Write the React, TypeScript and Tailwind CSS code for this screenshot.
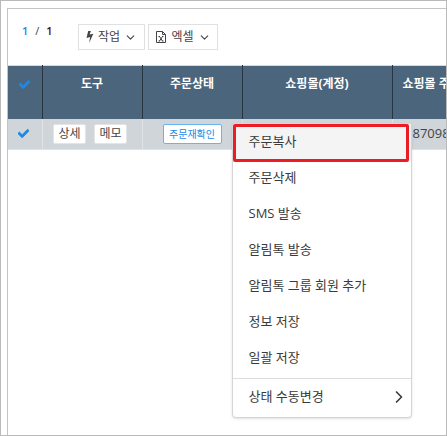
import { useState } from "react";
import { FaCheck } from "react-icons/fa";
import { FiChevronDown, FiChevronRight } from "react-icons/fi";

const menuItems = [
  "주문복사",
  "주문삭제",
  "SMS 발송",
  "알림톡 발송",
  "알림톡 그룹 회원 추가",
  "정보 저장",
  "일괄 저장",
];

const headers = ["도구", "주문상태", "쇼핑몰(계정)"];

function BoltIcon() {
  return (
    <svg viewBox="0 0 8 12" className="h-3 w-2" fill="currentColor" aria-hidden="true">
      <path d="M2.2 0h2.7L3.6 3.6l3.7-.8L3.2 12l.9-6-3.6.9z" />
    </svg>
  );
}

function ExcelIcon() {
  return (
    <svg viewBox="0 0 12 14" className="h-3.5 w-3" fill="none" stroke="currentColor" aria-hidden="true">
      <path d="M1.5 1.5h6l3 3v8h-9zM7.5 1.5v3h3" />
      <path d="M4.5 6.5l3 4.5M7.5 6.5l-3 4.5M3.5 6.5H5M7 6.5h1.500M3.500 11H5M7 11h1.500" />
    </svg>
  );
}

function CheckToggle({ label }: { label: string }) {
  const [checked, setChecked] = useState(true);
  return (
    <label className="inline-flex h-4 w-4 cursor-pointer items-center justify-center">
      <input
        type="checkbox"
        aria-label={label}
        checked={checked}
        onChange={() => setChecked(!checked)}
        className="peer sr-only"
      />
      <FaCheck
        size={11}
        stroke="currentColor"
        strokeWidth={40}
        className="text-[#1e88e5] opacity-0 peer-checked:opacity-100"
      />
    </label>
  );
}

function ContextMenu() {
  return (
    <ul
      role="menu"
      className="absolute top-1 -left-[11px] z-10 w-[180px] rounded-sm border border-[#d5d5d5] bg-white text-left text-[13px] text-[#3a3a3a] shadow-sm"
    >
      {menuItems.map((item, i) => (
        <li key={item} role="none" className="relative">
          <button
            type="button"
            role="menuitem"
            className={`block h-9 w-full px-4 text-left ${i === 0 ? "bg-[#f4f4f4]" : "bg-white"}`}
          >
            {item}
          </button>
          {/* callout frame around the first entry */}
          {i === 0 && (
            <span className="pointer-events-none absolute inset-x-0 top-0 z-10 mr-0.5 h-[38px] rounded-xs border-3 border-[#ed1c24]" />
          )}
        </li>
      ))}
      <li role="none" className="mt-0.5 border-t border-[#ddd] pb-0.5">
        <button
          type="button"
          role="menuitem"
          className="flex h-9 w-full items-center justify-between pr-0.5 pl-4"
        >
          상태 수동변경
          <FiChevronRight size={20} strokeWidth={2} />
        </button>
      </li>
    </ul>
  );
}

export default function App() {
  return (
    <div className="flex min-h-screen border border-[#bababa] bg-white pt-[7px] pl-1.5 font-['Open_Sans','Noto_Sans_CJK_KR',sans-serif] text-xs text-[#444]">
      <main className="min-w-0 flex-1 overflow-hidden border-t border-l border-[#c4c4c4]">
        <div className="flex h-14 items-start pt-[15px] pl-3.5">
          <p className="flex w-14 gap-[7px] text-[11px] leading-[14px] font-semibold">
            <span className="text-[#1e88e5]">1</span>
            <span className="font-normal">/</span>
            <span className="text-[#4a1010]">1</span>
          </p>
          <div className="flex gap-[3px]">
            <button
              type="button"
              className="flex h-[26px] w-[67px] items-center justify-center gap-1 border border-[#e0e0e0]"
            >
              <BoltIcon />
              작업
              <FiChevronDown size={13} strokeWidth={2} />
            </button>
            <button
              type="button"
              className="flex h-[26px] w-[70px] items-center justify-center gap-1 border border-[#e0e0e0]"
            >
              <ExcelIcon />
              엑셀
              <FiChevronDown size={13} strokeWidth={2} />
            </button>
          </div>
        </div>

        <table className="w-[534px] table-fixed border-collapse border-t border-[#d5dadc]">
          <colgroup>
            <col className="w-[34px]" />
            <col className="w-[100px]" />
            <col className="w-[100px]" />
            <col className="w-[150px]" />
            <col className="w-[150px]" />
          </colgroup>
          <thead>
            <tr className="h-[53px] bg-[#4b657d] align-top text-white">
              <th scope="col" className="border-r border-[#263540] pt-2.5">
                <CheckToggle label="전체 선택" />
              </th>
              {headers.map((h) => (
                <th key={h} scope="col" className="border-r border-[#263540] pt-2.5 leading-4 font-bold">
                  {h}
                </th>
              ))}
              <th scope="col" className="pt-2.5 pl-2.5 text-left leading-4 font-bold">
                쇼핑몰 주
              </th>
            </tr>
          </thead>
          <tbody>
            <tr className="h-[31px] border-b border-[#dfe2e4] bg-[#d0d5d9] text-center">
              <td className="border-r border-[#e0e3e6] pr-0.5">
                <CheckToggle label="주문 선택" />
              </td>
              <td className="border-r border-[#e0e3e6]">
                <div className="flex justify-center gap-2 pr-1">
                  <button type="button" className="h-5 w-[33px] rounded-xs border border-[#e4e4e4] bg-white leading-4">
                    상세
                  </button>
                  <button type="button" className="h-5 w-[33px] rounded-xs border border-[#e4e4e4] bg-white leading-4">
                    메모
                  </button>
                </div>
              </td>
              <td className="border-r border-[#e0e3e6]">
                <button
                  type="button"
                  className="ml-5 block h-5 w-[59px] rounded-xs border border-[#64b5f6] bg-white text-[10px] leading-4 text-[#1e88e5]"
                >
                  주문재확인
                </button>
              </td>
              <td className="relative border-r border-[#e0e3e6] align-top">
                <ContextMenu />
              </td>
              <td className="pl-5 text-left text-[13px]">87098</td>
            </tr>
          </tbody>
        </table>
      </main>
    </div>
  );
}
